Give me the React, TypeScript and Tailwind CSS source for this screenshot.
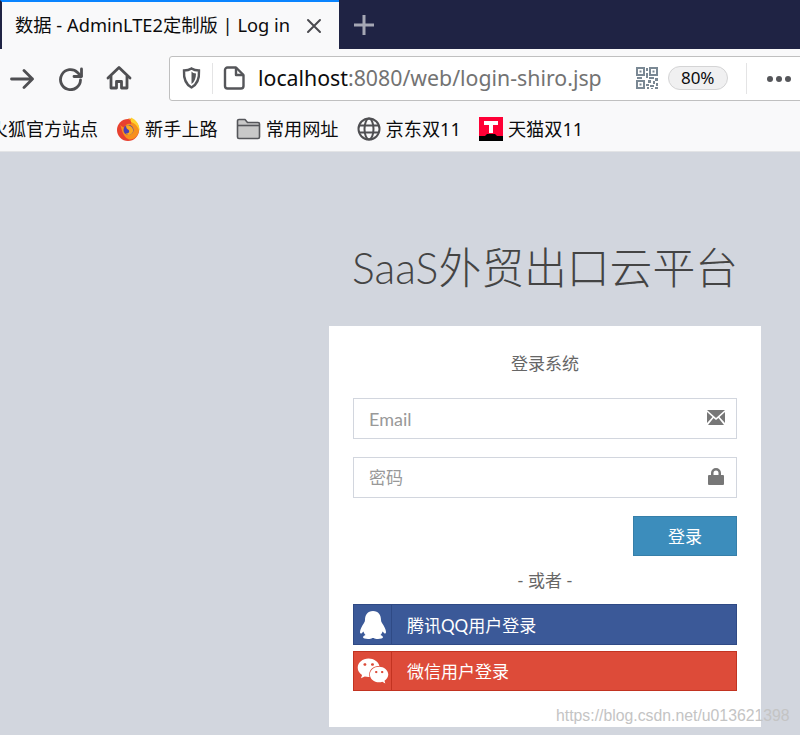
import React from "react";
import { FaWeixin } from "react-icons/fa";

const chromeFont = "font-['Noto_Sans','Noto_Sans_CJK_SC',sans-serif]";
const pageFont = "font-['Lato','Noto_Sans_CJK_SC',sans-serif]";

function FirefoxIcon() {
    return (
        <svg width="24" height="24" viewBox="0 0 24 24">
            <circle cx="12" cy="13" r="11" fill="#e8412f" />
            <path d="M3 6 C6 9 5 19 13 22.5 C20 23 24 16 23 10 C21 3 15 1 12 1.5 C15 3.5 16 6 15 7 C11 6 9 8 9 11 C6 10 4 8 3 6 Z" fill="#f7901e" />
            <path d="M15 0.5 C20 2.5 24 8 23.5 14 C21.5 9 19 6 15 5 Z" fill="#ffd12e" />
            <circle cx="12.5" cy="13" r="5" fill="#4a3fb5" />
            <path d="M10 8.5 C13 7.5 18 10 17 14.5 C16 18 12 19 9.5 16.5 C13 17 14.5 14 12 12.5 C11 12 10 11 10 8.5 Z" fill="#fba91f" />
        </svg>
    );
}

function QqIcon() {
    return (
        <svg width="28" height="28" viewBox="0 0 28 28" fill="#fff">
            <path d="M14 0 C19.5 0 22 4 22 9 C22 10 22.3 11 23 12 C25 15 27 18.5 27 21 C27 22.5 26 23 25 22 L23.6 20.5 C23 22 22.5 23 21.5 24 C23 24.6 24 25.4 24 26.3 C24 27.4 21.5 28 19 28 C17 28 15.5 27.6 14.8 27 H13.2 C12.5 27.6 11 28 9 28 C6.5 28 4 27.4 4 26.3 C4 25.4 5 24.6 6.5 24 C5.5 23 5 22 4.4 20.5 L3 22 C2 23 1 22.5 1 21 C1 18.5 3 15 5 12 C5.7 11 6 10 6 9 C6 4 8.5 0 14 0 Z" />
        </svg>
    );
}

function Bookmark({ icon, label }: { icon: React.ReactNode; label: string }) {
    return (
        <div className="flex items-center gap-[5px]">
            {icon}
            <span className="text-[18.2px] leading-6 text-[#0c0c0d]">{label}</span>
        </div>
    );
}

function Field({ placeholder, size, icon }: { placeholder: string; size: string; icon: React.ReactNode }) {
    return (
        <div className="h-[41px] border border-[#d2d6de] bg-white flex items-center justify-between pl-[15px] pr-[11px]">
            <span className={`pt-[1px] text-[#999] ${size}`}>{placeholder}</span>
            {icon}
        </div>
    );
}

function SocialButton({ icon, label, color }: { icon: React.ReactNode; label: string; color: string }) {
    return (
        <div className={`flex items-center border text-white ${color}`}>
            <div className="w-[38px] h-full flex items-center justify-center border-r border-inherit shrink-0">{icon}</div>
            <span className="pl-[15px] pt-[2px] text-[17px] leading-6">{label}</span>
        </div>
    );
}

export default function App() {
    return (
        <div className="w-[800px] h-[735px] overflow-hidden bg-[#d2d6de] relative">
            {/* tab strip */}
            <div className={`h-[49px] bg-[#1f2344] flex ${chromeFont}`}>
                <div className="w-[339px] border-t-2 border-[#0a84ff] border-l-2 border-l-[#1f2344] bg-[#f9f9fa] flex items-center pl-[13px] pr-[17px] pb-[2px] justify-between">
                    <span className="text-[18.3px] text-[#0c0c0d] whitespace-nowrap">数据 - AdminLTE2定制版 | Log in</span>
                    <svg className="mt-[2px]" width="16" height="16" viewBox="0 0 16 16" stroke="#4a4a4f" strokeWidth="2" strokeLinecap="round">
                        <path d="M2 2 L14 14 M14 2 L2 14" />
                    </svg>
                </div>
                <div className="ml-[14px] flex items-center">
                    <svg width="22" height="22" viewBox="0 0 22 22" stroke="#a5a7b4" strokeWidth="3">
                        <path d="M11 1 V21 M1 11 H21" />
                    </svg>
                </div>
            </div>

            {/* toolbar */}
            <div className={`h-[57px] bg-[#f9f9fa] flex items-center pl-[10px] pt-[1px] ${chromeFont}`}>
                <svg className="mt-[2px] shrink-0" width="24" height="22" viewBox="0 0 24 22" fill="none" stroke="#4f4f52" strokeWidth="2.8" strokeLinecap="round" strokeLinejoin="round">
                    <path d="M1.5 11 H22.5 M14 2.5 L22.5 11 L14 19.5" />
                </svg>
                <svg className="ml-[25px] mt-[1px] shrink-0" width="24" height="24" viewBox="0 0 24 24" fill="none" stroke="#4f4f52" strokeWidth="2.8" strokeLinecap="round" strokeLinejoin="round">
                    <path d="M21.5 13 A10 10 0 1 1 18.5 5.5 L22 9" />
                    <path d="M22.5 2 V9.5 H15" />
                </svg>
                <svg className="ml-[23px] shrink-0" width="26" height="26" viewBox="0 0 26 26" fill="none" stroke="#4f4f52" strokeWidth="2.8" strokeLinejoin="round">
                    <path d="M2 13 L13 2.5 L24 13" strokeLinecap="round" />
                    <path d="M5 11 V23 H10.5 V16.5 H15.5 V23 H21 V11" />
                </svg>
                <div className="ml-[37px] h-[45px] w-[640px] shrink-0 bg-white border border-[#c0c0c0] rounded-l-[3px] flex items-center">
                    <svg className="ml-[12px] shrink-0" width="19" height="22" viewBox="0 0 19 22" fill="none" stroke="#55565a" strokeWidth="2.4">
                        <path d="M2 3.5 C6 3.5 8 2.5 9.5 1.5 C11 2.5 13 3.5 17 3.5 C17.5 12 15 17.5 9.5 20.5 C4 17.5 1.5 12 2 3.5 Z" />
                        <path d="M9.5 4.5 V17 C12.5 15 14 11 14 6.5 C12 6.5 10.5 5.5 9.5 4.5 Z" fill="#55565a" stroke="none" />
                    </svg>
                    <div className="ml-[11px] w-px h-[31px] bg-[#e4e4e5] shrink-0" />
                    <svg className="ml-[10px] shrink-0" width="22" height="24" viewBox="0 0 22 24" fill="none" stroke="#55565a" strokeWidth="2.4" strokeLinejoin="round">
                        <path d="M4.5 1.5 H13 L20.5 9 V20 A2.5 2.5 0 0 1 18 22.5 H4.5 A2.5 2.5 0 0 1 2 20 V4 A2.5 2.5 0 0 1 4.5 1.5 Z" />
                        <path d="M13 1.5 V9 H20.5" />
                    </svg>
                    <span className="ml-[13px] text-[21.3px] whitespace-nowrap">
                        <span className="text-[#0c0c0d]">localhost</span>
                        <span className="text-[#737373]">:8080/web/login-shiro.jsp</span>
                    </span>
                    <svg className="ml-[34px] shrink-0" width="22" height="22" viewBox="0 0 22 22" fill="#7a8894">
                        <path fillRule="evenodd" d="M0 0 H9 V9 H0 Z M2 2 V7 H7 V2 Z M13 0 H22 V9 H13 Z M15 2 V7 H20 V2 Z M0 13 H9 V22 H0 Z M2 15 V20 H7 V15 Z" />
                        <path d="M3.5 3.5 H5.5 V5.5 H3.5 Z M16.5 3.5 H18.5 V5.5 H16.5 Z M3.5 16.5 H5.5 V18.5 H3.5 Z M10 1 H12 V4 H10 Z M10 6 H12 V11 H10 Z M1 10 H6 V12 H1 Z M13 10 H18 V12 H13 Z M19 11 H22 V14 H19 Z M12 13 H15 V16 H12 Z M17 14 H19 V17 H17 Z M20 16 H22 V19 H20 Z M10 17 H13 V19 H10 Z M14 18 H18 V20 H14 Z M11 20 H13 V22 H11 Z M19 20 H22 V22 H19 Z M15 21 H17 V22 H15 Z" />
                    </svg>
                    <div className="ml-[10px] w-[60px] h-[24px] shrink-0 rounded-full bg-[#f0f0f1] border border-[#d4d4d5] flex items-center justify-center text-[17px] text-[#0c0c0d]">
                        80%
                    </div>
                    <div className="ml-[18px] w-px h-[31px] bg-[#e4e4e5] shrink-0" />
                    <div className="ml-[20px] mt-[1px] flex gap-[3px] shrink-0">
                        <div className="w-[6px] h-[6px] rounded-full bg-[#55565a]" />
                        <div className="w-[6px] h-[6px] rounded-full bg-[#55565a]" />
                        <div className="w-[6px] h-[6px] rounded-full bg-[#55565a]" />
                    </div>
                </div>
            </div>

            {/* bookmarks */}
            <div className={`h-[46px] bg-[#f9f9fa] border-b border-[#e3e4e6] flex items-center gap-[18px] -ml-[10px] ${chromeFont}`}>
                <span className="text-[18px] leading-6 text-[#0c0c0d] whitespace-nowrap">火狐官方站点</span>
                <Bookmark icon={<FirefoxIcon />} label="新手上路" />
                <Bookmark
                    icon={
                        <svg width="25" height="22" viewBox="0 0 25 22" fill="#c8c8c8" stroke="#55565a" strokeWidth="1.6" strokeLinejoin="round">
                            <path d="M1.5 3 A1.5 1.5 0 0 1 3 1.5 H9 L11.5 4.5 H22 A1.5 1.5 0 0 1 23.5 6 V19 A1.5 1.5 0 0 1 22 20.5 H3 A1.5 1.5 0 0 1 1.5 19 Z" />
                            <path d="M1.5 7.5 H23.5" fill="none" />
                        </svg>
                    }
                    label="常用网址"
                />
                <Bookmark
                    icon={
                        <svg width="24" height="24" viewBox="0 0 24 24" fill="none" stroke="#4f4f52" strokeWidth="2">
                            <circle cx="12" cy="12" r="10.5" />
                            <ellipse cx="12" cy="12" rx="4.5" ry="10.5" />
                            <path d="M2 8.5 H22 M2 15.5 H22" />
                        </svg>
                    }
                    label="京东双11"
                />
                <Bookmark
                    icon={
                        <svg width="24" height="24" viewBox="0 0 24 24">
                            <rect width="24" height="24" fill="#ff0036" />
                            <path d="M0 19 H6 L8 17 H16 L18 19 H24 V24 H0 Z" fill="#000" />
                            <path d="M5 4 H19 V8 H14 V16 H10 V8 H5 Z" fill="#fff" />
                        </svg>
                    }
                    label="天猫双11"
                />
            </div>

            {/* login page */}
            <div className={`pt-[86px] pl-[329px] ${pageFont}`}>
                <div className="w-[432px]">
                    <h1 className="h-[60px] leading-[60px] text-center text-[42.8px] font-light text-[#444] whitespace-nowrap mb-[28px]">
                        SaaS外贸出口云平台
                    </h1>
                    <div className="bg-white px-[24px] pt-[25px] h-[401px]">
                        <p className="h-[26px] leading-[26px] text-center text-[17px] text-[#666] mb-[21px]">登录系统</p>
                        <div className="mb-[18px]">
                            <Field
                                placeholder="Email"
                                size="text-[18px]"
                                icon={
                                    <svg className="-mt-[2px]" width="18" height="15" viewBox="0 0 18 15">
                                        <path d="M0 0 H18 L9 8 Z M0 2 L5.5 7 L0 13 Z M18 2 L12.5 7 L18 13 Z M1 15 L6.5 8 L9 10 L11.5 8 L17 15 Z" fill="#777" />
                                    </svg>
                                }
                            />
                        </div>
                        <div className="mb-[18px]">
                            <Field
                                placeholder="密码"
                                size="text-[17px]"
                                icon={
                                    <svg className="-mt-[2px] mr-[1px]" width="16" height="17" viewBox="0 0 16 17">
                                        <path fillRule="evenodd" d="M3 7 V5 A5 5 0 0 1 13 5 V7 H15 A1 1 0 0 1 16 8 V16 A1 1 0 0 1 15 17 H1 A1 1 0 0 1 0 16 V8 A1 1 0 0 1 1 7 Z M5.5 7 H10.5 V5 A2.5 2.5 0 0 0 5.5 5 Z" fill="#777" />
                                    </svg>
                                }
                            />
                        </div>
                        <div className="flex justify-end">
                            <div className="w-[104px] h-[40px] pt-[1px] bg-[#3c8dbc] border border-[#367fa9] text-white text-[17px] flex items-center justify-center">
                                登录
                            </div>
                        </div>
                        <p className="mt-[12px] mb-[10px] h-[26px] leading-[26px] text-center text-[17px] text-[#666]">- 或者 -</p>
                        <div className="flex flex-col gap-[6px]">
                            <div className="h-[41px] flex">
                                <SocialButton
                                    icon={<QqIcon />}
                                    label="腾讯QQ用户登录"
                                    color="w-full bg-[#3b5998] border-[#2f4a85]"
                                />
                            </div>
                            <div className="h-[40px] flex">
                                <SocialButton
                                    icon={<FaWeixin size={32} />}
                                    label="微信用户登录"
                                    color="w-full bg-[#dd4b39] border-[#c23321]"
                                />
                            </div>
                        </div>
                    </div>
                </div>
            </div>

            {/* blog watermark */}
            <span className="absolute left-[556px] top-[706px] text-[15.8px] leading-5 text-[#c4c4c4] font-['Liberation_Sans',sans-serif] whitespace-nowrap">
                https://blog.csdn.net/u013621398
            </span>
        </div>
    );
}
